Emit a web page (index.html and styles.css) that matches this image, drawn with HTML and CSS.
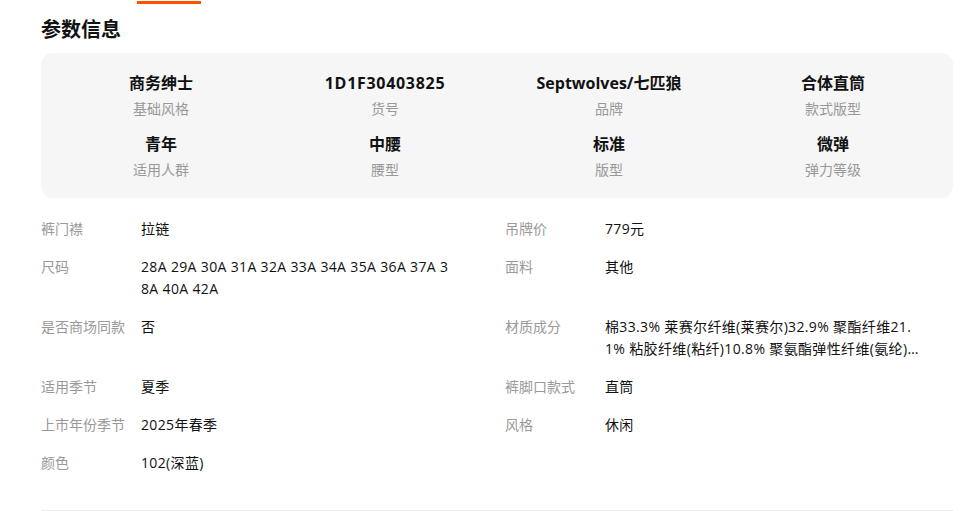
FILE: index.html
```html
<!DOCTYPE html>
<html lang="zh-CN">
<head>
<meta charset="utf-8">
<link rel="stylesheet" href="styles.css">
</head>
<body>
<div class="page">
  <div class="tabbar"><span class="tab-indicator"></span></div>
  <h2 class="title">参数信息</h2>
  <div class="summary">
    <div class="sum-item"><div class="sum-val">商务绅士</div><div class="sum-label">基础风格</div></div>
    <div class="sum-item"><div class="sum-val num">1D1F30403825</div><div class="sum-label">货号</div></div>
    <div class="sum-item"><div class="sum-val">Septwolves/七匹狼</div><div class="sum-label">品牌</div></div>
    <div class="sum-item"><div class="sum-val">合体直筒</div><div class="sum-label">款式版型</div></div>
    <div class="sum-item"><div class="sum-val">青年</div><div class="sum-label">适用人群</div></div>
    <div class="sum-item"><div class="sum-val">中腰</div><div class="sum-label">腰型</div></div>
    <div class="sum-item"><div class="sum-val">标准</div><div class="sum-label">版型</div></div>
    <div class="sum-item"><div class="sum-val">微弹</div><div class="sum-label">弹力等级</div></div>
  </div>
  <div class="attrs">
    <div class="attr"><span class="attr-key">裤门襟</span><span class="attr-val">拉链</span></div>
    <div class="attr"><span class="attr-key">吊牌价</span><span class="attr-val">779元</span></div>
    <div class="attr"><span class="attr-key">尺码</span><span class="attr-val">28A 29A 30A 31A 32A 33A 34A 35A 36A 37A 38A 40A 42A</span></div>
    <div class="attr"><span class="attr-key">面料</span><span class="attr-val">其他</span></div>
    <div class="attr"><span class="attr-key">是否商场同款</span><span class="attr-val">否</span></div>
    <div class="attr"><span class="attr-key">材质成分</span><span class="attr-val">棉33.3% 莱赛尔纤维(莱赛尔)32.9% 聚酯纤维21.1% 粘胶纤维(粘纤)10.8% 聚氨酯弹性纤维(氨纶)1.9%</span></div>
    <div class="attr"><span class="attr-key">适用季节</span><span class="attr-val">夏季</span></div>
    <div class="attr"><span class="attr-key">裤脚口款式</span><span class="attr-val">直筒</span></div>
    <div class="attr"><span class="attr-key">上市年份季节</span><span class="attr-val">2025年春季</span></div>
    <div class="attr"><span class="attr-key">风格</span><span class="attr-val">休闲</span></div>
    <div class="attr"><span class="attr-key">颜色</span><span class="attr-val">102(深蓝)</span></div>
  </div>
  <div class="divider"></div>
</div>
</body>
</html>
```

FILE: styles.css
```css
* { box-sizing: border-box; }
html, body { margin: 0; padding: 0; background: #fff; }
body {
  font-family: "Open Sans", "Noto Sans CJK SC", sans-serif;
  color: #111;
}
.page {
  width: 912px;
  margin-left: 41px;
}
.tabbar {
  height: 2px;
  padding-top: 1px;
}
.tab-indicator {
  display: block;
  width: 64px;
  height: 3px;
  margin-left: 96px;
  background: #ff5000;
}
.title {
  margin: 14px 0 0;
  font-size: 20px;
  line-height: 28px;
  font-weight: 700;
  color: #111;
}
.summary {
  margin-top: 9px;
  background: #f6f6f6;
  border-radius: 12px;
  padding: 18px 8px 18px;
  display: grid;
  grid-template-columns: repeat(4, 1fr);
  row-gap: 13px;
  text-align: center;
}
.sum-val {
  font-size: 16px;
  line-height: 24px;
  font-weight: 700;
  color: #111;
}
.sum-val.num {
  letter-spacing: 0.7px;
}
.sum-label {
  margin-top: 4px;
  font-size: 14px;
  line-height: 20px;
  color: #999;
}
.attrs {
  margin-top: 20px;
  display: grid;
  grid-template-columns: 464px 448px;
  row-gap: 16px;
  padding-bottom: 36px;
}
.attr {
  display: flex;
  font-size: 14px;
  line-height: 22px;
}
.attr-key {
  width: 100px;
  flex: none;
  color: #999;
}
.attr-val {
  width: 315px;
  color: #111;
  letter-spacing: 0.35px;
  word-break: break-all;
  display: -webkit-box;
  -webkit-box-orient: vertical;
  -webkit-line-clamp: 2;
  overflow: hidden;
}
.divider {
  height: 1px;
  background: #eee;
}
```
